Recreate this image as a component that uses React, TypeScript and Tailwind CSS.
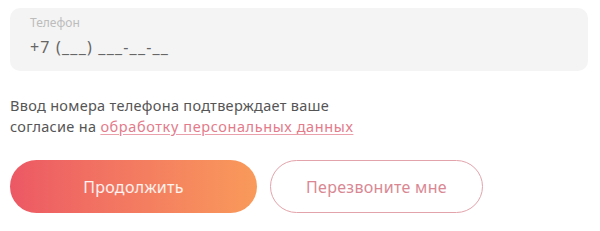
export default function App() {
  return (
    <div className="w-[600px] h-[231px] bg-white px-[10px] pt-[8px]" style={{ fontFamily: '"Noto Sans", Inter, sans-serif' }}>
      <div className="w-[578px] h-[63px] rounded-[10px] bg-[#f4f4f4] pl-[20px] pt-[7px]">
        <div className="text-[12px] leading-[16px] text-[#bcbcbc]">Телефон</div>
        <div className="mt-[6px] text-[16px] leading-[20px] text-[#666666] tracking-[1.2px]">+7 (___) ___-__-__</div>
      </div>
      <p className="mt-[24px] text-[14.5px] leading-[21px] text-[#555555] tracking-[0.3px]">
        Ввод номера телефона подтверждает ваше
        <br />
        согласие на{' '}
        <a href="#" className="text-[#e37b8a] underline underline-offset-2 decoration-[#e9a0aa] tracking-[0.6px]">обработку персональных данных</a>
      </p>
      <div className="mt-[23px] flex gap-[13px]">
        <button className="w-[247px] h-[53px] rounded-full bg-gradient-to-r from-[#ec5864] to-[#f99a5a] text-[16px] text-white/90 tracking-[0.3px]">
          Продолжить
        </button>
        <button className="w-[213px] h-[53px] rounded-full border border-[#e3a3ab] text-[16px] text-[#d98893] bg-white tracking-[0.3px]">
          Перезвоните мне
        </button>
      </div>
    </div>
  );
}
